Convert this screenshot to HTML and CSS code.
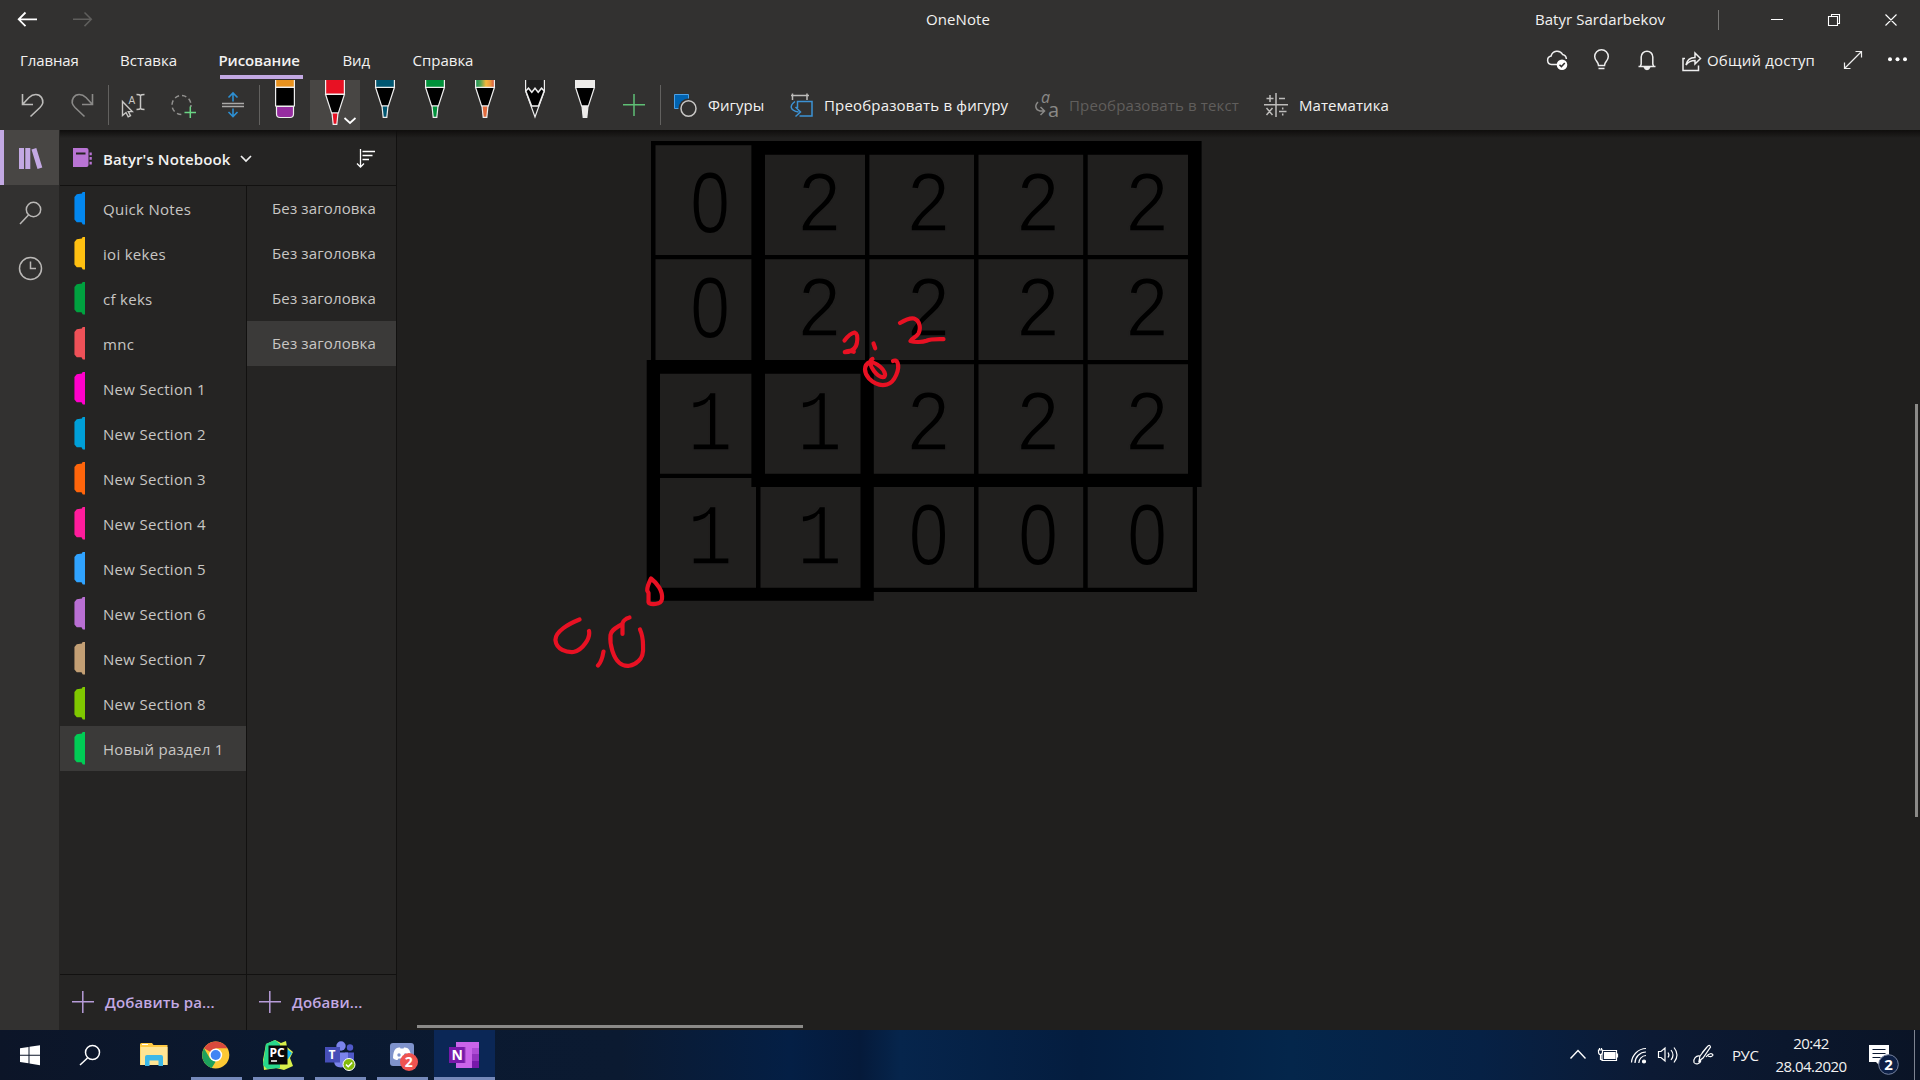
FILE: index.html
```html
<!DOCTYPE html>
<html lang="ru">
<head>
<meta charset="utf-8">
<title>OneNote</title>
<link rel="stylesheet" href="styles.css">
</head>
<body>
<header class="head">
  <div class="titlebar">
    <svg class="nav" width="110" height="40" viewBox="0 0 110 40"><path d="M37 19.300H19M25.500 12.500L18.700 19.300l6.800 6.800" stroke="#fff" stroke-width="1.800"/><path d="M73 19.300h18M84.500 12.500l6.800 6.800-6.800 6.800" stroke="#5f5e5c" stroke-width="1.500"/></svg>
    <span class="app">OneNote</span>
    <span class="user">Batyr Sardarbekov</span>
    <svg class="win" width="220" height="40" viewBox="1700 0 220 40"><path d="M1718.500 10v20" stroke="#777674"/><path d="M1771 19.500h12M1828.500 16.500h9v9h-9zM1831.500 16v-1.500h8v9h-2M1885.500 14.500l11 11M1896.500 14.500l-11 11" stroke="#fff" stroke-width="1.100"/></svg>
  </div>
  <div class="tabs">
    <span class="tab t1">Главная</span><span class="tab t2">Вставка</span><span class="tab t3">Рисование</span><span class="tab t4">Вид</span><span class="tab t5">Справка</span>
    <svg class="acts" width="164" height="40" viewBox="1540 40 164 40" stroke="#eee" stroke-width="1.500">
      <path d="M1557 64.500h-5.500a4.300 4.300 0 0 1-.4-8.500 6.200 6.200 0 0 1 11.500-1.500 5 5 0 0 1 3.800 4.500"/><circle cx="1562" cy="64.700" r="5.300" fill="#fff" stroke="none"/><path d="M1559.500 64.700l1.900 1.900 3.400-3.600" stroke="#333130"/>
      <path d="M1598.500 65.500c0-4-3.800-4.500-3.800-9a6.800 6.800 0 0 1 13.600 0c0 4.500-3.800 5-3.800 9zM1598.500 68.500h6"/>
      <path d="M1638.500 66.500h17M1640.500 66l.7-2V57a5.800 5.800 0 0 1 11.600 0v7l.7 2"/><path d="M1644.500 67.500a2.600 2.600 0 0 0 5 0z" fill="#eee"/>
      <path d="M1685 58.500h-2v12h15.500v-5M1686 65c1-5 4-7.500 9-7.500V53l5.500 5.500-5.500 5.500v-3.500c-4 0-6.500 1-9 4.500z"/>
    </svg>
    <span class="share">Общий доступ</span>
    <svg class="more" width="80" height="40" viewBox="1840 40 80 40"><path d="M1845 68l16-16M1855.500 51.500h6v6M1844.500 62.500v6h6" stroke="#eee" stroke-width="1.200"/><g fill="#fff"><circle cx="1890" cy="59.300" r="2"/><circle cx="1897.500" cy="59.300" r="2"/><circle cx="1905" cy="59.300" r="2"/></g></svg>
  </div>
  <div class="ribbon">
    <svg width="102" height="50" viewBox="8 80 102 50" stroke-width="1.600"><path d="M22.500 94v10.500H33M23 104l6-6.500c4-4 10-4 12.500 0 2.500 4 1.500 7-1.500 10l-9.500 9" stroke="#bdbcba"/><path d="M92.500 94v10.500H82M92 104l-6-6.500c-4-4-10-4-12.500 0-2.500 4-1.500 7 1.500 10l9.500 9" stroke="#8a8987"/><path d="M108.500 85v40" stroke="#62615f" stroke-width="1"/></svg>
    <svg width="150" height="50" viewBox="110 80 150 50">
      <path d="M122.500 101.500v14l3.500-3 2.200 4.300 2.300-1.200-2.200-4h4z" stroke="#c8c7c5" stroke-width="1.400"/><text x="128.500" y="104" class="tiny">A</text><path d="M136.500 94.500c2 0 3.500.3 4 1 .5-.7 2-1 4-1M140.500 95v13.500M136.500 109.500c2 0 3.500-.3 4-1 .5.700 2 1 4 1" stroke="#c8c7c5" stroke-width="1.500"/>
      <circle cx="181.500" cy="105" r="9.500" stroke="#92918f" stroke-width="1.500" stroke-dasharray="4.500 3"/><path d="M183 107h14v14h-14z" fill="#323130"/><path d="M184.500 112.500h11.500M190.300 106.500V118" stroke="#6bd585" stroke-width="1.500"/>
      <path d="M222 103.500h22M222 106.500h22" stroke="#aaa9a7" stroke-width="1.500"/><path d="M233 101.500v-8M228.500 97.500l4.500-4.500 4.500 4.500M233 108.500v8M228.500 112l4.500 4.500 4.500-4.500" stroke="#2d8fd2" stroke-width="1.600"/>
      <path d="M259.500 85v40" stroke="#62615f"/>
    </svg>
    <svg class="pens" width="401" height="50" viewBox="260 80 401 50" stroke="#eee" stroke-width="1.200">
      <defs><linearGradient id="rainbow"><stop stop-color="#179257"/><stop offset=".28" stop-color="#5ca554"/><stop offset=".55" stop-color="#f5b83c"/><stop offset=".78" stop-color="#eb9940"/><stop offset="1" stop-color="#d6523e"/></linearGradient></defs>
      <path d="M275.600 79v8.300h18.800V79" fill="#e9921e"/><path d="M275.600 87.300h18.800V106h-18.800z" fill="#000"/><path d="M276.500 106.500h17v7.500q0 3.500-3.500 3.500h-10q-3.500 0-3.500-3.500z" fill="#962da0"/>
      <path d="M310 80h50v50h-50z" fill="#484644" stroke="none"/><path d="M325.600 79v15h18.800V79" fill="#e81123"/><path d="M325.600 94.500h18.800l-6 18.500h-6.800z" fill="#000"/><path d="M332 113h6l-1.200 11.300h-3.600z" fill="#e81123"/><path d="M344.500 118l5.500 5 5.500-5" stroke="#fff" stroke-width="1.700"/>
      <path d="M375.600 79v8.300h18.800V79" fill="#005671"/><path d="M375.600 87.500h18.800l-6 18.500h-6.800z" fill="#000"/><path d="M382 106h6l-1.200 11.300h-3.600z" fill="#005671"/>
      <path d="M425.600 79v8.300h18.800V79" fill="#00913a"/><path d="M425.600 87.500h18.800l-6 18.500h-6.800z" fill="#000"/><path d="M432 106h6l-1.200 11.300h-3.600z" fill="#00913a"/>
      <path d="M475.600 79v8.300h18.800V79" fill="url(#rainbow)"/><path d="M475.600 87.500h18.800l-6 18.500h-6.800z" fill="#000"/><path d="M482 106h6l-1.200 11.300h-3.600z" fill="#e26b3d"/>
      <path d="M525.600 79v12l9.400 26 9.400-26V79" fill="#1f1f1f"/><path d="M525.800 91l2.700-2.800 3.300 4 3.200-4 3.200 4 3.300-4 2.700 2.800-5.700 15h-6.900z" fill="#000" stroke-width="1.500"/>
      <path d="M575.600 79v8.300h18.800V79" fill="#edebe9"/><path d="M575.600 87.500h18.800l-6 18.500h-6.800z" fill="#000"/><path d="M582 106h6l-1.200 11.300h-3.600z" fill="#edebe9"/>
      <path d="M623 104.700h22M634 94v22" stroke="#5fbf75" stroke-width="1.500"/><path d="M660.500 85v40" stroke="#62615f" stroke-width="1"/>
    </svg>
    <div class="cmd c1"><svg width="24" height="24" viewBox="674 93 24 24"><path d="M674.500 94.500h14v14h-14z" fill="#0063b1" stroke="#4aa0e6"/><ellipse cx="688.500" cy="108.500" rx="10" ry="10" fill="#323130" stroke="none"/><ellipse cx="688.500" cy="108.500" rx="7.500" ry="7.800" stroke="#c8c7c5" stroke-width="1.500"/></svg><span>Фигуры</span></div>
    <div class="cmd c2"><svg width="24" height="24" viewBox="790 93 24 24" stroke-width="1.500"><path d="M792.500 93.500v6.500M807 93.500v6.500M791 95.500h18" stroke="#bdbcba"/><path d="M797.500 108v-6.500h14.500V116h-12.500M795 101.500c-5.500 4-5.500 9 3.500 10.500M795.500 107l5 5-5 4.500" stroke="#3c92d4"/></svg><span>Преобразовать в фигуру</span></div>
    <div class="cmd c3 off"><svg width="24" height="24" viewBox="1035 93 24 24" stroke="#8a8987" stroke-width="1.500"><text x="1041" y="103" class="ia">a</text><text x="1048" y="116.500" class="ib">a</text><path d="M1038 102c-4 4-2.500 10 6 9M1040.500 107l4 4-4 4"/></svg><span>Преобразовать в текст</span></div>
    <div class="cmd c4"><svg width="24" height="24" viewBox="1264 93 24 24" stroke="#bdbcba" stroke-width="1.500"><path d="M1276 93v24M1264 104.800h24M1270 95v7M1266.500 98.500h7M1279 98.500h6M1266.500 108l6 7M1272.500 108l-6 7M1279 111.500h7.500M1282.700 107.500v2M1282.700 113.500v2"/></svg><span>Математика</span></div>
  </div>
</header>
<main class="main">
  <nav class="rail">
    <div class="railbtn on"><svg width="53" height="55" viewBox="6 130 53 55"><path fill="#c3a9e3" d="M19 148h5v21h-5zM25.300 148h5v21h-5zM31.500 149.500l4.800-1.500 6 19.500-4.800 1.500z"/></svg></div>
    <div class="railbtn"><svg width="59" height="55" viewBox="0 185 59 55" stroke="#bab8b6" stroke-width="1.500"><circle cx="33.500" cy="209.500" r="7.200"/><path d="M28.500 215l-8.500 9"/></svg></div>
    <div class="railbtn"><svg width="59" height="55" viewBox="0 240 59 55" stroke="#bab8b6" stroke-width="1.500"><circle cx="30.500" cy="268.500" r="11"/><path d="M30.500 261.500v7h5.500"/></svg></div>
  </nav>
  <aside class="side">
    <div class="book"><svg width="20" height="20" viewBox="73 148 20 20"><path fill="#b974d4" d="M73 148h13.500q2 0 2 2v15q0 2-2 2H73zM89.500 152.500h2.300v2.700h-2.300zM89.500 157h2.300v2.700h-2.300zM89.500 161.700h2.300v2.700h-2.300z"/><path d="M76 152.500h9.500v2H76z" fill="#252423"/></svg><span class="bname">Batyr's Notebook</span><svg width="12" height="8" viewBox="0 0 12 8" class="chev"><path d="M1 1l5 5 5-5" stroke="#eee" stroke-width="1.700"/></svg><svg class="sort" width="20" height="20" viewBox="356 148 20 20" stroke="#fff" stroke-width="1.300"><path d="M360.500 149v17.500M357 163.500l3.500 3.500 3.500-3.500M362.500 151.500H375M362.500 155.500h10M362.500 159.500h6.500"/></svg></div>
    <div class="cols">
      <div class="col secs">
        <div class="list">
          <div class="item"><i class="tag k1"></i><span>Quick Notes</span></div>
          <div class="item"><i class="tag k2"></i><span>ioi kekes</span></div>
          <div class="item"><i class="tag k3"></i><span>cf keks</span></div>
          <div class="item"><i class="tag k4"></i><span>mnc</span></div>
          <div class="item"><i class="tag k5"></i><span>New Section 1</span></div>
          <div class="item"><i class="tag k6"></i><span>New Section 2</span></div>
          <div class="item"><i class="tag k7"></i><span>New Section 3</span></div>
          <div class="item"><i class="tag k8"></i><span>New Section 4</span></div>
          <div class="item"><i class="tag k9"></i><span>New Section 5</span></div>
          <div class="item"><i class="tag k10"></i><span>New Section 6</span></div>
          <div class="item"><i class="tag k11"></i><span>New Section 7</span></div>
          <div class="item"><i class="tag k12"></i><span>New Section 8</span></div>
          <div class="item sel"><i class="tag k13"></i><span>Новый раздел 1</span></div>
        </div>
        <div class="add"><svg width="22" height="22" viewBox="0 0 22 22"><path d="M0 10.800h22M10.800 0v22" stroke="#b79cd9" stroke-width="1.500"/></svg><span>Добавить ра...</span></div>
      </div>
      <div class="col pages">
        <div class="list">
          <div class="item"><span>Без заголовка</span></div>
          <div class="item"><span>Без заголовка</span></div>
          <div class="item"><span>Без заголовка</span></div>
          <div class="item sel"><span>Без заголовка</span></div>
        </div>
        <div class="add"><svg width="22" height="22" viewBox="0 0 22 22"><path d="M0 10.800h22M10.800 0v22" stroke="#b79cd9" stroke-width="1.500"/></svg><span>Добави...</span></div>
      </div>
    </div>
  </aside>
  <section class="canvas">
    <svg width="1523" height="900" viewBox="397 130 1523 900">
      <g fill="#000" class="grid">
        <path d="M651 141h4.500v220H651zM651 141h110v4.300H651zM651 255h540v4.300H651zM865 150h4.400v215H865zM974 150h4.500v442H974zM1083.200 150h4.500v442h-4.500zM865 360h330v4.300H865zM651 473.700h110v4.300H651zM756 480h4.500v112H756zM865 587.700h332v4.200H865zM1192.700 480h4.300v111h-4.300z"/>
        <path fill-rule="evenodd" d="M751.400 141h450.200v346H751.400zM765 154.700v319h423v-319z"/>
        <path fill-rule="evenodd" d="M646.700 360h227.100v240.700H646.700zM660 373.700v214h200.500v-214z"/>
      </g>
      <g class="num">
        <g transform="translate(710 0) scale(.87 1)"><text class="zero" y="231">0</text><text class="zero" y="336">0</text><text y="450">1</text><text y="564">1</text></g>
        <g transform="translate(819.500 0) scale(.87 1)"><text y="231.500">2</text><text y="336">2</text><text y="450">1</text><text y="564">1</text></g>
        <g transform="translate(928.500 0) scale(.87 1)"><text y="231.500">2</text><text y="336">2</text><text y="450">2</text><text class="zero" y="563.500">0</text></g>
        <g transform="translate(1038 0) scale(.87 1)"><text y="231.500">2</text><text y="336">2</text><text y="450">2</text><text class="zero" y="563.500">0</text></g>
        <g transform="translate(1147 0) scale(.87 1)"><text y="231.500">2</text><text y="336">2</text><text y="450">2</text><text class="zero" y="563.500">0</text></g>
      </g>
      <g stroke="#e81123" stroke-width="4.200" stroke-linecap="round" stroke-linejoin="round">
        <path d="M844.500 340.500c3-4 7-7.500 10-8 3.500 1 3 7 2.300 11-.8 4-4 7-8 8.300l-4 .3c3-2 6-1.500 9-.3M873.500 343.500l1.700 4.800"/>
        <path d="M900 323c5-3 10-5.500 14-4.500 6 2 7 10 4.500 15-2.500 4-7 5-8 7.500 4 1.500 12 1.200 16-.3 4-1.700 10-1.700 17-1.500"/>
        <path d="M872.500 359c-4 2-1.500 8 1.500 12 3 4 7 6.500 10 6 2.500-2 0-7-3.500-10-3-2.500-6.500-5-10.500-5-7 3-6 11-1 16.500 5 5 12 7.500 18 6 8-2 13-16 10.500-22-.7-2-3-2.500-4.500-1.500"/>
        <path d="M651 578.500c-2 4-4 8-3.800 12l1.300 2.500v9c.5 2.500 4 2.300 7 2 3-.3 6-1.500 6.500-5 1-8-5-16-11-20.500zM648.500 594v8"/>
        <path d="M579.500 619.500c-10 4-25 12-24 21 1 9 11 12 18 11.500 9-1.500 17-14 15.500-21M603.500 651.500c-1 6-2.500 11-5.500 14"/>
        <path d="M629.500 617.500c-4 1-7.500 4-7 8v8.500M622 624c-6 4-11 6-11.500 11-1 10 3 23 9 28 6 5 14 3 19-2 5-4 5-10 4.500-16 0-6-1-11-3-15.500"/>
      </g>
    </svg>
    <i class="hbar"></i><i class="vbar"></i>
  </section>
</main>
<footer class="task">
  <svg width="60" height="50" viewBox="0 1030 60 50"><path fill="#fff" d="M20 1048.200l8.500-1.200v7.700H20zM29.500 1046.800l10.500-1.600v9.500H29.500zM20 1055.700h8.500v7.500l-8.500-1.200zM29.500 1055.700H40v9.500l-10.500-1.600z"/></svg>
  <svg width="64" height="50" viewBox="60 1030 64 50" stroke="#fff" stroke-width="1.500"><circle cx="92.500" cy="1052.500" r="7"/><path d="M87.500 1058l-7.500 7"/></svg>
  <div class="app-btn"><svg width="61" height="50" viewBox="124 1030 61 50"><path d="M140 1044.500q0-1.500 1.500-1.500H152l1.500 2h14v20H140z" fill="#ffca44"/><path d="M140.500 1047h27v18h-27z" fill="#ffe594"/><path d="M142 1044.500h6" stroke="#fff"/><path d="M145 1066v-9q0-2 2-2h14q2 0 2 2v9h-4.500v-5.500h-9v5.500z" fill="#3cb8e8"/></svg></div>
  <div class="app-btn run"><svg width="61" height="50" viewBox="186 1030 61 50"><circle cx="215.700" cy="1055" r="13.600" fill="#fcc934"/><path d="M215.700 1055L204 1048.200a13.600 13.600 0 0 1 23.500 0H215.700z" fill="#d94a3d"/><path d="M204 1048.200l6 10.300 5.700 3-4 6.500a13.600 13.600 0 0 1-7.700-19.800z" fill="#1da15c"/><circle cx="215.700" cy="1055" r="6.500" fill="#fff"/><circle cx="215.700" cy="1055" r="5" fill="#4285f4"/></svg></div>
  <div class="app-btn run"><svg width="61" height="50" viewBox="248 1030 61 50"><path d="M266 1044l9-4 6 3 5-2 1 6 6 5-3 6 3 8-9 4-8-2-12 2-1-10z" fill="#d9f04a"/><path d="M266 1044l9-4 5 4v24l-13 1-4-4z" fill="#27d88c"/><path d="M286 1048l6 5-4 6h-4z" fill="#14b8ee"/><path d="M268.500 1045.500h19v19h-19z" fill="#080808"/><text x="269.500" y="1056.500" class="pc">PC</text><path d="M271 1061h6" stroke="#fff" stroke-width="1.500"/></svg></div>
  <div class="app-btn run"><svg width="61" height="50" viewBox="310 1030 61 50"><circle cx="341" cy="1046" r="4.700" fill="#7b83eb"/><circle cx="350" cy="1047.500" r="3.200" fill="#5059c9"/><path d="M345 1052.500h9v7q0 5-6 5h-3z" fill="#5059c9"/><path d="M334 1052.500h14v8q0 7-7 7t-7-7z" fill="#7b83eb"/><path d="M325 1047h15v15.500h-15z" fill="#464eb8"/><text x="328.500" y="1059" class="tm">T</text><circle cx="349" cy="1064.500" r="6" fill="#83ba0a" stroke="#fff"/><path d="M346 1064.500l2.200 2.200 4-4.200" stroke="#fff" stroke-width="1.600"/></svg></div>
  <div class="app-btn run"><svg width="61" height="50" viewBox="372 1030 61 50"><rect x="390" y="1043" width="24" height="23" rx="3" fill="#7f93cc"/><path d="M393 1058c0-4 1-8 3-9.500 1.500-1 3-1.300 4-1l.5 1h3l.5-1c1 0 3 .3 4 1 2 1.500 3 5.500 3 9.500-1 1.500-3 2-4.500 2l-1-1.500h-7l-1 1.500c-1.500 0-3.500-.5-4.500-2z" fill="#fff"/><circle cx="399" cy="1055" r="1.700" fill="#7f93cc"/><circle cx="405.500" cy="1055" r="1.700" fill="#7f93cc"/><circle cx="409" cy="1062" r="9" fill="#ef5350"/><text x="404.800" y="1067" class="dn">2</text></svg></div>
  <div class="app-btn run cur"><svg width="61" height="50" viewBox="434 1030 61 50"><path d="M456 1042h23v26h-23z" fill="#ca64ea"/><path d="M472 1048h7v6h-7z" fill="#ae4bd5"/><path d="M472 1054h7v7h-7z" fill="#9332bf"/><path d="M472 1061h7v7h-7z" fill="#7719aa"/><path d="M456 1047h9.500v16H456z" fill="#953ab8"/><path d="M449 1047h15.500v16H449z" fill="#7719aa"/><text x="451.500" y="1060" class="on">N</text></svg></div>
  <svg class="tray" width="156" height="50" viewBox="1565 1030 156 50" stroke="#fff" stroke-width="1.200">
    <path d="M1570.500 1058.500l7.500-8 7.500 8" stroke-width="1.400"/>
    <path d="M1603 1050.500h13.500v10H1602v-7M1617.500 1053.500v4"/><path d="M1604.500 1052.500h10.500v6h-10.500z" fill="#fff"/><path d="M1598.500 1050v2q0 2.500 2 2.500t2-2.500v-2zM1599.500 1048v2M1601.500 1048v2M1600.500 1055v4.500h2"/>
    <path d="M1631.500 1062.500a15 15 0 0 1 14.500-14M1635 1063a11 11 0 0 1 11-11M1638.800 1063a7.500 7.500 0 0 1 7.200-7.500"/><circle cx="1644" cy="1061.500" r="1.500" fill="#fff"/>
    <path d="M1658.500 1051.500h2.500l4-3.500v13l-4-3.500h-2.500zM1668 1052.500q1.800 2.500 0 5M1671 1050q4 5 0 10M1674 1047.500q6 7.500 0 15"/>
    <path d="M1699 1061l1-5 8-10q2-1.500 2.500 1l-7.500 11zM1700 1056c-4-1-7 3-6 6.500 2 2.500 6 1.500 7-2M1706 1057c3-4 6-4 7-2-1 2-3 2-5 1M1702 1053l5-6"/>
  </svg>
  <span class="lang">РУС</span>
  <div class="clock"><span>20:42</span><span class="date">28.04.2020</span></div>
  <svg class="note" width="60" height="50" viewBox="1860 1030 60 50"><path d="M1869 1045h20v17h-9v4l-4-4h-7z" fill="#fff"/><path d="M1872.500 1049.500h13M1872.500 1053.500h13M1872.500 1057.500h8" stroke="#0b1830" stroke-width="1.200"/><circle cx="1888.500" cy="1064.500" r="9.800" fill="#0d2046" stroke="#7783a0"/><text x="1884.300" y="1070" class="nn">2</text><path d="M1914.500 1030v50" stroke="#7d8492"/></svg>
</footer>
</body>
</html>
```
FILE: styles.css
```css
* { box-sizing: border-box; }
body {
  margin: 0;
  width: 1920px;
  height: 1080px;
  overflow: hidden;
  display: flex;
  flex-direction: column;
  background: #201f1e;
  color: #f3f2f1;
  font: 15px/20px "Open Sans", "Noto Sans", sans-serif;
  white-space: nowrap;
}
svg { display: block; flex: none; fill: none; overflow: visible; }
.pens { overflow: hidden; }
.head { height: 130px; background: #323130; display: flex; flex-direction: column; flex: none; }

.titlebar { height: 40px; display: flex; align-items: center; }
.app, .user { padding-bottom: 2px; letter-spacing: .1px; }
.app { margin-left: 816px; width: 609px; }
.user { width: 165px; letter-spacing: .05px; }

.tabs { height: 40px; display: flex; align-items: stretch; padding-left: 20px; line-height: 40px; }
.tab { height: 39px; margin-right: 43px; letter-spacing: -.1px; }
.t1 { width: 57px; }
.t2 { width: 57px; letter-spacing: 0; }
.t3 { width: 83px; font-weight: 600; text-indent: -1.500px; border-bottom: 4px solid #c3a9e3; margin-right: 40px; }
.t4 { width: 27px; text-indent: -.5px; }
.t5 { width: 61px; margin-right: 0; letter-spacing: 0; text-indent: -.5px; }
.acts { margin-left: auto; }
.share { width: 136px; padding-left: 3px; letter-spacing: .2px; }

.ribbon { height: 50px; display: flex; padding-left: 8px; align-items: center; }
.cmd { display: flex; align-items: center; gap: 10px; }
.c1 { margin-left: 13px; width: 116px; }
.c2 { width: 245px; letter-spacing: .17px; }
.c3 { width: 229px; letter-spacing: .14px; }
.c4 { gap: 11px; letter-spacing: .05px; }
.off { color: #605e5c; }
.tiny { font: 10px "Liberation Sans", sans-serif; fill: #c8c7c5; }
.ia { font: italic 16px "Open Sans", sans-serif; fill: #8a8987; stroke: none; }
.ib { font: 20px "Open Sans", sans-serif; fill: #8a8987; stroke: none; }

.main { height: 900px; display: flex; flex: none; }
.rail { width: 60px; border-right: 1px solid #252423; background: #323130; flex: none; }
.railbtn { height: 55px; }
.railbtn.on { background: #484644; border-left: 4px solid #c3a9e3; }
.railbtn.on svg { margin-left: 2px; }
.side { width: 337px; background: #252423; border-right: 1px solid #121110; display: flex; flex-direction: column; flex: none; }
.book { height: 56px; border-bottom: 1px solid #121110; display: flex; align-items: center; padding: 0 20px 0 13px; }
.bname { margin-left: 10px; width: 137px; font-weight: 600; padding-top: 2px; letter-spacing: .12px; }
.sort { margin-left: auto; }
.chev { margin-top: 2px; }
.cols { flex: 1; display: flex; }
.col { display: flex; flex-direction: column; }
.secs { width: 187px; border-right: 1px solid #121110; }
.pages { flex: 1; }
.list { flex: 1; }
.item { height: 45px; display: flex; align-items: center; color: #c8c6c4; }
.secs .item { padding-left: 14px; letter-spacing: .3px; }
.pages .item { padding: 0 0 2px 25px; letter-spacing: .14px; }
.sel { background: #3b3a39; }
.tag { width: 11px; height: 33px; margin: -1px 18px 0 0; background: var(--c); clip-path: polygon(72% 6%, 80% 0, 100% 0, 100% 100%, 80% 100%, 68% 93%, 25% 93%, 4% 85%, 4% 17%, 25% 8%); }
.k1 { --c: #0387ef; } .k2 { --c: #ffc011; } .k3 { --c: #00a13f; } .k4 { --c: #ee5158; }
.k5 { --c: #ff00cb; } .k6 { --c: #009fd8; } .k7 { --c: #ff650b; } .k8 { --c: #ff1c9c; }
.k9 { --c: #30a3ff; } .k10 { --c: #b96fd3; } .k11 { --c: #c39f74; } .k12 { --c: #7fc800; } .k13 { --c: #00cc55; }
.add { height: 56px; border-top: 1px solid #121110; display: flex; align-items: center; padding: 0 0 2px 12px; gap: 11px; color: #c3a9e3; font-weight: 600; letter-spacing: .12px; }

.canvas { flex: 1; position: relative; }
.main::before { content: ""; position: absolute; z-index: 2; top: 130px; left: 60px; width: 1860px; height: 8px; background: linear-gradient(#0f0e0d, #0f0e0d00); }
.grid, .num { filter: blur(.6px); }
.num text { font: 87px "Liberation Mono", monospace; text-anchor: middle; fill: #000; stroke: #201f1e; stroke-width: 1.600px; }
.num .zero { font: 300 79px "Open Sans", sans-serif; stroke: #000; stroke-width: 1.800px; }
.hbar { position: absolute; left: 20px; top: 895px; width: 386px; height: 3px; background: #8b8a88; }
.vbar { position: absolute; right: 2px; top: 274px; width: 3px; height: 413px; background: #8b8a88; }

.task { height: 50px; flex: none; display: flex; background: linear-gradient(90deg, #0c1528 0, #0a1930 300px, #0b1a31 620px, #041f45 790px, #051a3a 860px, #06254c 900px, #041d3f 1080px, #04264b 1290px, #062145 1480px, #0c1a34 1650px, #0a1426 1920px); }
.app-btn { width: 61px; margin-right: 1px; position: relative; }
.run::after { content: ""; position: absolute; left: 5px; right: 5px; bottom: 0; height: 3px; background: #7589ba; }
.cur { background: #0b2756; }
.cur::after { left: 0; right: 0; }
.pc { font: 700 12px "Open Sans", sans-serif; fill: #fff; }
.tm { font: 700 12px "Open Sans", sans-serif; fill: #fff; }
.dn { font: 700 14px "Open Sans", sans-serif; fill: #fff; }
.on { font: 700 14px "Open Sans", sans-serif; fill: #fff; }
.nn { font: 700 15px "Open Sans", sans-serif; fill: #fff; }
.tray { margin-left: auto; }
.lang { width: 50px; padding-left: 11px; line-height: 51px; letter-spacing: -.4px; }
.clock { width: 80px; margin-right: 9px; display: flex; flex-direction: column; align-items: center; padding-top: 2px; line-height: 23px; letter-spacing: -.55px; }
```
